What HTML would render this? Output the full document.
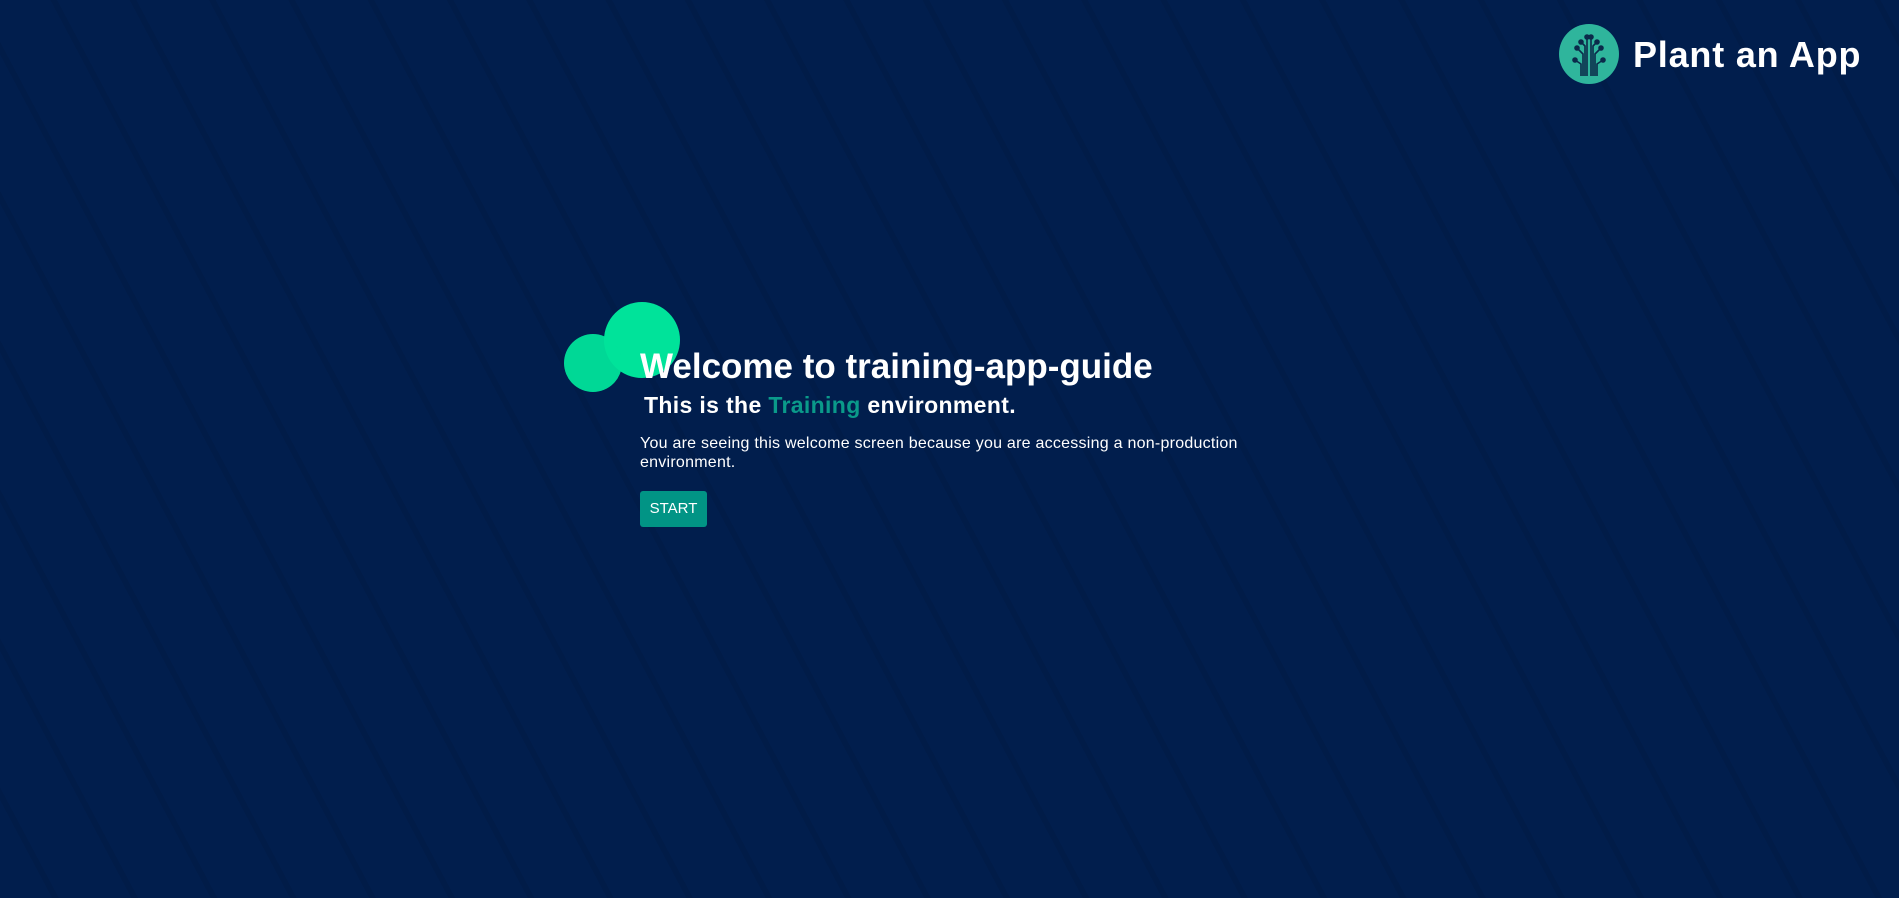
<!DOCTYPE html>
<html><head><meta charset="utf-8"><style>
html,body{margin:0;padding:0;width:1899px;height:898px;overflow:hidden;background:#011e4d;font-family:"Liberation Sans",sans-serif;}
.bg{position:absolute;inset:0;background:repeating-linear-gradient(62deg,rgba(0,0,0,0) 0 46px,rgba(0,10,40,0.12) 46px 52px,rgba(0,0,0,0) 52px 70px);}
.c1{position:absolute;left:604px;top:302px;width:76px;height:76px;border-radius:50%;background:#00e39a;}
.c2{position:absolute;left:564px;top:334px;width:58px;height:58px;border-radius:50%;background:#00e39a;opacity:.95;}
h1{position:absolute;left:640px;top:347px;margin:0;color:#fff;font-size:35px;font-weight:bold;}
h2{position:absolute;left:644px;top:392px;margin:0;color:#fff;font-size:23px;font-weight:bold;letter-spacing:0.35px;}
h2 span{color:#0a9a8a;}
p{position:absolute;left:640px;top:434px;margin:0;width:620px;color:#fff;font-size:16px;line-height:19px;letter-spacing:0.25px;}
.btn{position:absolute;left:640px;top:491px;width:67px;height:36px;background:#019485;border-radius:3px;color:#fff;font-size:15px;line-height:36px;text-align:center;}
.logo{position:absolute;left:1559px;top:24px;width:60px;height:60px;border-radius:50%;background:#2fb59c;}
.lt{position:absolute;left:1633px;top:34px;color:#fff;font-size:36px;font-weight:bold;letter-spacing:0.8px;}
</style></head><body>
<div class="bg"></div>
<div class="logo"><svg width="60" height="60" viewBox="0 0 60 60" fill="none" stroke="#0b2a4a" stroke-width="1.6">
<path d="M28 52V14M32 52V14M24 52V30l-6-6M36 52V30l6-6M22 52V40l-6-4M38 52V40l6-4M26 52V22l-4-4M34 52V22l4-4"/>
<g fill="#0b2a4a"><circle cx="28" cy="13" r="2"/><circle cx="32" cy="13" r="2"/><circle cx="18" cy="24" r="2"/><circle cx="42" cy="24" r="2"/><circle cx="16" cy="36" r="2"/><circle cx="44" cy="36" r="2"/><circle cx="22" cy="18" r="2"/><circle cx="38" cy="18" r="2"/></g></svg></div>
<div class="lt">Plant an App</div>
<div class="c1"></div><div class="c2"></div>
<h1>Welcome to training-app-guide</h1>
<h2>This is the <span>Training</span> environment.</h2>
<p>You are seeing this welcome screen because you are accessing a non-production environment.</p>
<div class="btn">START</div>
</body></html>
